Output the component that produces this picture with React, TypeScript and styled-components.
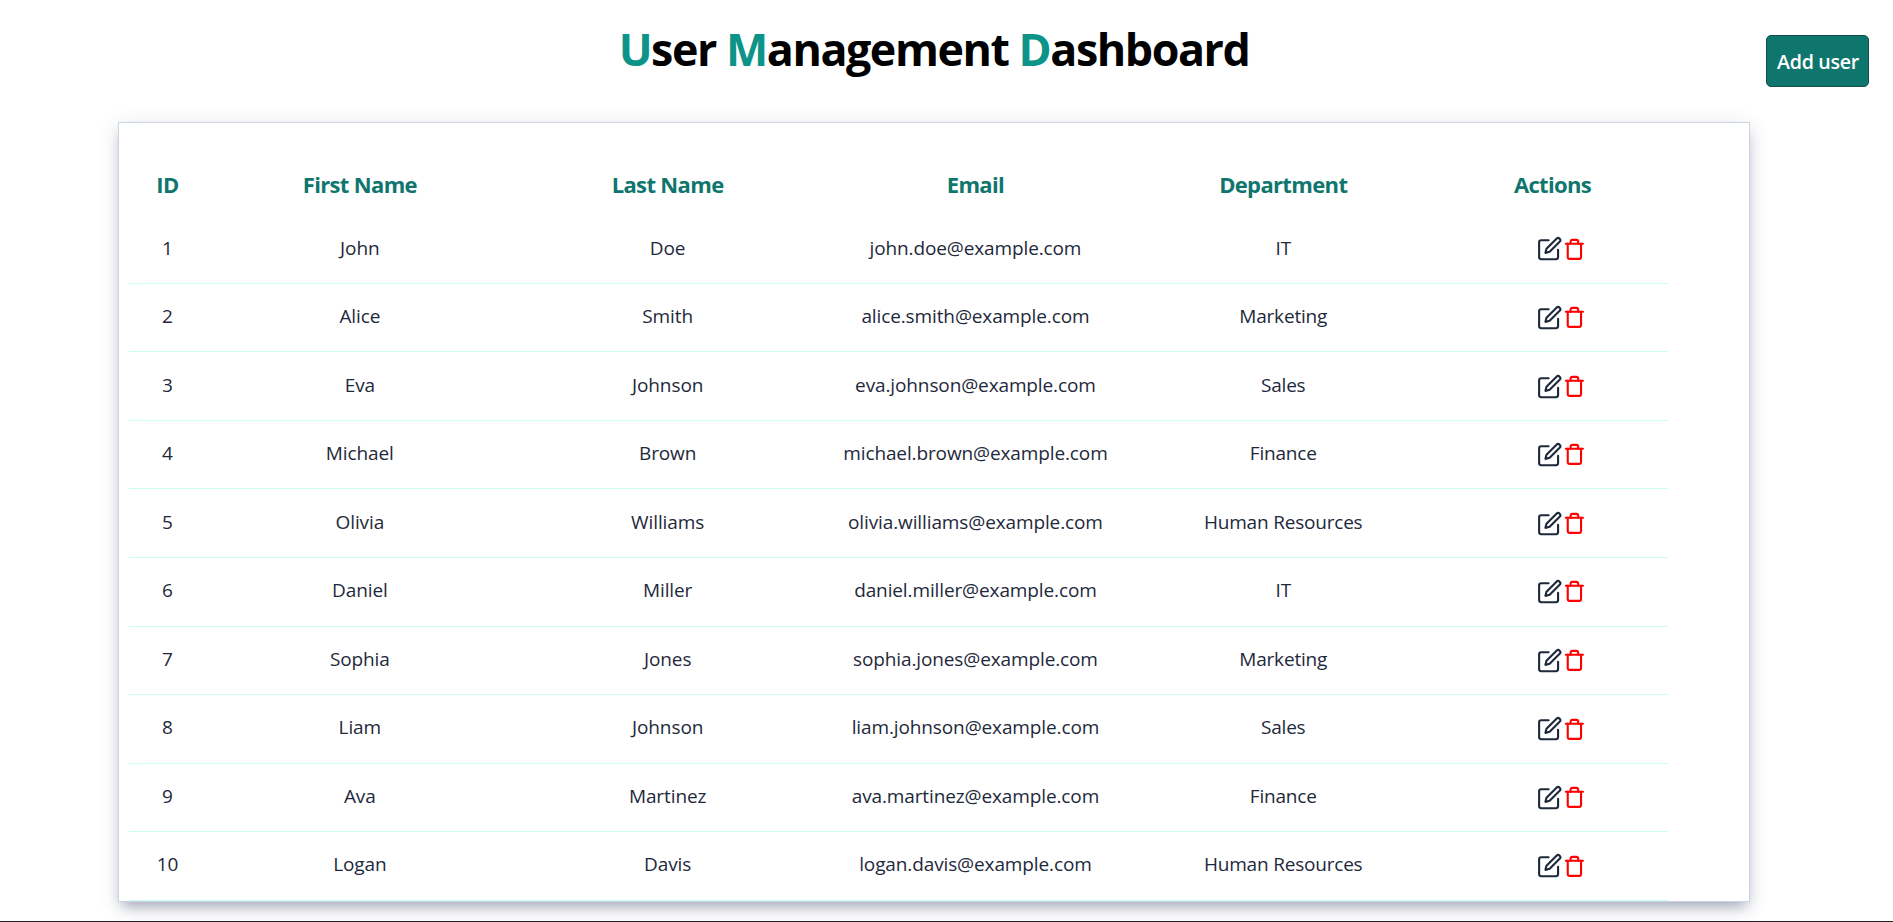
import React from 'react';
import styled, { createGlobalStyle } from 'styled-components';
import { FiEdit, FiTrash } from 'react-icons/fi';

const GlobalStyle = createGlobalStyle`
  *, *::before, *::after { box-sizing: border-box; }
  body {
    margin: 0;
    overflow: hidden;
    background: #fff;
    font-family: "Segoe UI", "Open Sans", "Noto Sans", sans-serif;
  }
`;

const Page = styled.main`
  height: 922px;
  display: flex;
  flex-direction: column;
  border-bottom: 1px solid #1f2124;
`;

const Header = styled.header`
  height: 122px;
  flex: none;
  display: grid;
  grid-template-columns: 118px 1632px 119px;
  align-items: start;
`;

const Title = styled.h1`
  grid-column: 2;
  margin: 16px 0 0;
  text-align: center;
  font-size: 44.8px;
  line-height: 66px;
  font-weight: 700;
  letter-spacing: -1.45px;
  color: #000;
`;

const Accent = styled.span`
  color: #0d9488;
`;

const AddButton = styled.button`
  justify-self: end;
  margin-top: 35px;
  width: 103px;
  height: 52px;
  padding: 0 0 0 1px;
  border: 1px solid #134e4a;
  border-radius: 5px;
  background: #0f766e;
  color: #fff;
  font: 600 19.6px "Segoe UI", "Open Sans", sans-serif;
  letter-spacing: -0.3px;
  white-space: nowrap;
`;

const Card = styled.section`
  width: 1632px;
  height: 780px;
  margin-left: 118px;
  padding: 32px 10px 0;
  border: 1px solid #cbd5e1;
  background: #fff;
  box-shadow: 0 4px 19px rgba(50, 60, 90, 0.15), 0 9px 13px -5px rgba(50, 60, 100, 0.38);
`;

const Table = styled.div`
  width: 1539px;
`;

const Row = styled.div`
  display: grid;
  grid-template-columns: 5% 20% 20% 20% 20% 15%;
  align-items: center;
  justify-items: center;
  height: 68.55px;
  border-bottom: 1px solid #ccfbf1;
  color: #1e293b;
  font-size: 19px;
  font-weight: 400;
`;

const HeadRow = styled(Row)`
  height: 60.3px;
  border-bottom: 0;
  color: #0f766e;
  font-size: 22px;
  font-weight: 700;
  letter-spacing: -0.65px;
`;

const Cell = styled.span<{ $spacing?: number }>`
  padding-bottom: 3px;
  white-space: nowrap;
  letter-spacing: ${(p) => p.$spacing ?? -0.1}px;
`;

const HeadCell = styled.span`
  padding-bottom: 2px;
  white-space: nowrap;
`;

const Actions = styled.span`
  display: flex;
  align-items: center;
  gap: 1px;
  padding-left: 18px;
`;

const EditIcon = styled(FiEdit)`
  width: 25.3px;
  height: 25.3px;
  color: #1e293b;
`;

const TrashIcon = styled(FiTrash)`
  width: 22.8px;
  height: 22.8px;
  color: #f00;
  stroke-width: 2.2;
`;

const columns = ['ID', 'First Name', 'Last Name', 'Email', 'Department', 'Actions'];

const users = [
  ['John', 'Doe', 'IT'],
  ['Alice', 'Smith', 'Marketing'],
  ['Eva', 'Johnson', 'Sales'],
  ['Michael', 'Brown', 'Finance'],
  ['Olivia', 'Williams', 'Human Resources'],
  ['Daniel', 'Miller', 'IT'],
  ['Sophia', 'Jones', 'Marketing'],
  ['Liam', 'Johnson', 'Sales'],
  ['Ava', 'Martinez', 'Finance'],
  ['Logan', 'Davis', 'Human Resources'],
];

export default function App() {
  return (
    <Page>
      <GlobalStyle />
      <Header>
        <Title>
          <Accent>U</Accent>ser <Accent>M</Accent>anagement <Accent>D</Accent>ashboard
        </Title>
        <AddButton>Add user</AddButton>
      </Header>
      <Card>
        <Table>
          <HeadRow>
            {columns.map((name) => (
              <HeadCell key={name}>{name}</HeadCell>
            ))}
          </HeadRow>
          {users.map(([first, last, department], i) => (
            <Row key={i}>
              <Cell>{i + 1}</Cell>
              <Cell>{first}</Cell>
              <Cell>{last}</Cell>
              <Cell $spacing={-0.12}>{`${first}.${last}@example.com`.toLowerCase()}</Cell>
              <Cell $spacing={-0.2}>{department}</Cell>
              <Actions>
                <EditIcon />
                <TrashIcon />
              </Actions>
            </Row>
          ))}
        </Table>
      </Card>
    </Page>
  );
}
